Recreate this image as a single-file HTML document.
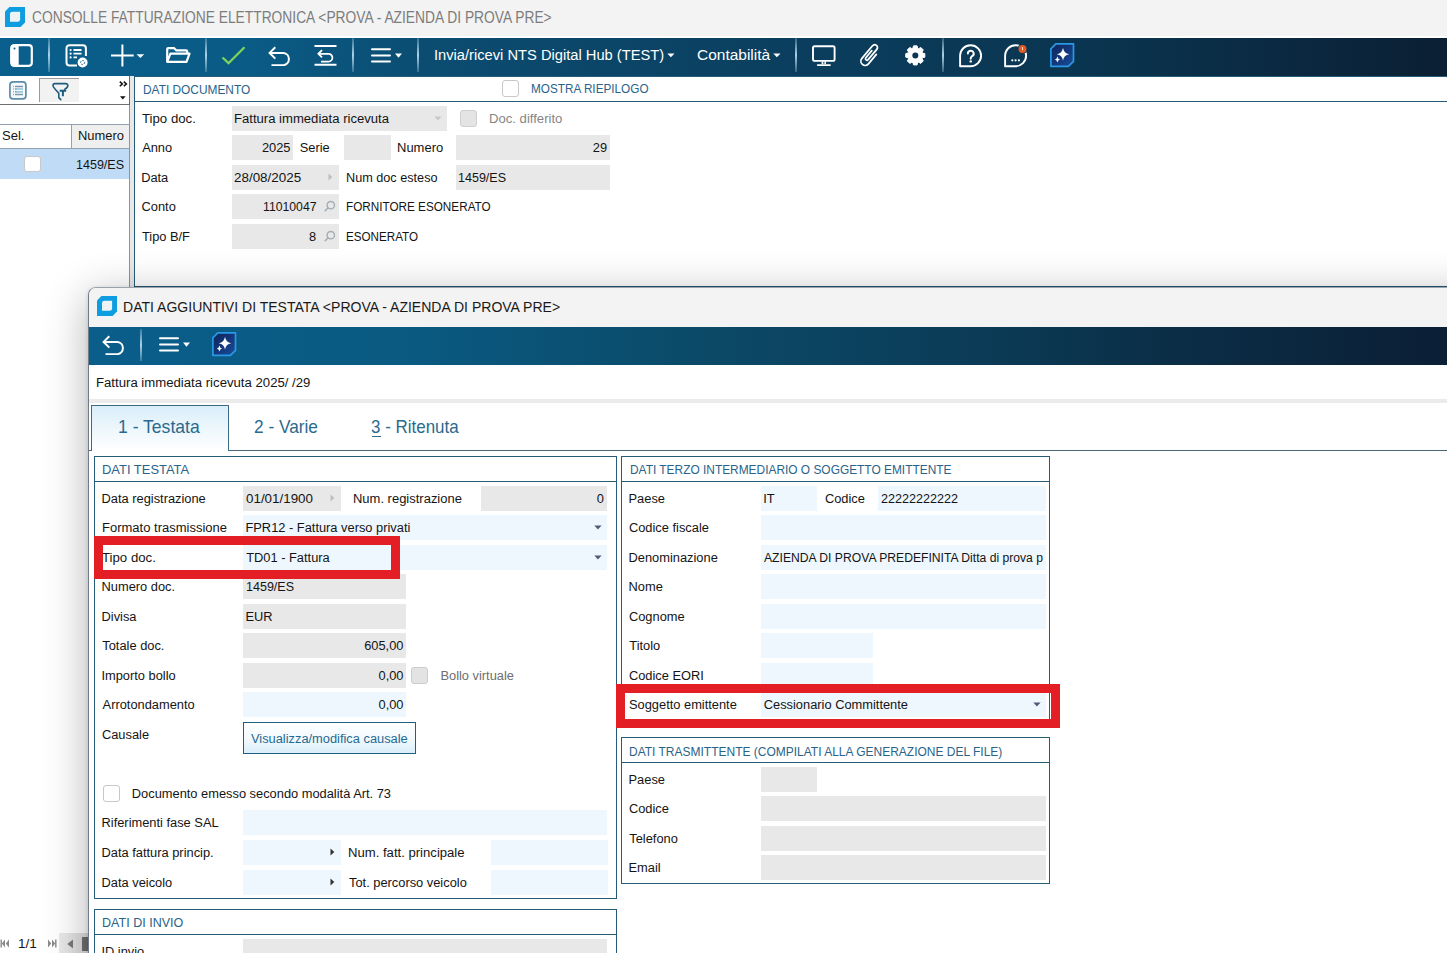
<!DOCTYPE html>
<html><head><meta charset="utf-8"><title>Consolle Fatturazione Elettronica</title>
<style>
html,body{margin:0;padding:0;width:1447px;height:953px;overflow:hidden;background:#fff;font-family:"Liberation Sans", sans-serif;}
body>div,body>svg{position:absolute;}
.t{white-space:nowrap;line-height:normal;}
</style></head><body>
<div style="left:0px;top:0px;width:1447.00px;height:35.80px;background:#f3f3f3"></div>
<div style="left:0px;top:35.8px;width:1447.00px;height:2.20px;background:#ffffff"></div>
<svg style="left:5px;top:7px;" width="20" height="20" viewBox="0 0 20 20"><path d="M4.4 0H20V15.6L15.6 20H0V4.4Z" fill="#0d9de0"/><path d="M7.3 4.7H15.1V12.2Q15.1 14.7 12.7 14.7H5V7Q5 4.7 7.3 4.7Z" fill="#eef3f6"/></svg>
<div class="t" style="left:31.81px;top:9px;font-size:15.8px;color:#7c7c7c;transform:scaleX(0.8731);transform-origin:0 0;">CONSOLLE FATTURAZIONE ELETTRONICA &lt;PROVA - AZIENDA DI PROVA PRE&gt;</div>
<div style="left:0px;top:38px;width:1447.00px;height:38.00px;background:linear-gradient(90deg,#0a5f8c 0px,#0a5b86 250px,#0b4d72 420px,#0b3e5e 800px,#0a3550 1080px,#0b2b44 1250px,#0b1f33 1447px)"></div>
<svg style="left:10px;top:44px;" width="23" height="23" viewBox="0 0 23 23"><rect x="1.2" y="1.2" width="20.6" height="20.6" rx="3" fill="none" stroke="#fff" stroke-width="2.2"/><rect x="1.2" y="1.2" width="7.5" height="20.6" fill="#fff"/><circle cx="4.5" cy="4.5" r="1" fill="#0a5e8a"/></svg>
<div style="left:48.3px;top:38px;width:1.80px;height:34.00px;background:linear-gradient(180deg,rgba(180,215,235,0.25),rgba(180,215,235,0.95) 50%,rgba(180,215,235,0.25))"></div>
<svg style="left:65px;top:44px;" width="24" height="24" viewBox="0 0 24 24"><path d="M12 21.5H4.5a3 3 0 0 1-3-3V4.2a3 3 0 0 1 3-3h13.4a3 3 0 0 1 3 3V12" fill="none" stroke="#fff" stroke-width="2"/><circle cx="5.6" cy="6" r="1.1" fill="#fff"/><circle cx="5.6" cy="9.7" r="1.1" fill="#fff"/><circle cx="5.6" cy="13.4" r="1.1" fill="#fff"/><path d="M8.5 6H16.5M8.5 9.7H16.5M8.5 13.4H12" stroke="#fff" stroke-width="1.8"/><circle cx="17.6" cy="18.5" r="5" fill="#fff"/><circle cx="17.6" cy="18.5" r="2" fill="none" stroke="#0a5e8a" stroke-width="1" stroke-dasharray="1.5 1.2"/></svg>
<svg style="left:110px;top:44px;" width="36" height="23" viewBox="0 0 36 23"><path d="M12.4 0.5V22.5M1 11.6H23.7" stroke="#fff" stroke-width="2"/><path d="M26.5 10.2H34.2L30.35 14.1Z" fill="#fff"/></svg>
<svg style="left:166px;top:47px;" width="25" height="17" viewBox="0 0 25 17"><path d="M1.2 14.8V2.3Q1.2 1.2 2.3 1.2H8.2L10.2 3.3H20Q21.2 3.3 21.2 4.5V6.5" fill="none" stroke="#fff" stroke-width="2.2" stroke-linejoin="round"/><path d="M1.2 14.8L4.4 6.6H23.5L20.5 14.8Z" fill="none" stroke="#fff" stroke-width="2.2" stroke-linejoin="round"/></svg>
<div style="left:205.3px;top:38px;width:1.80px;height:34.00px;background:linear-gradient(180deg,rgba(180,215,235,0.25),rgba(180,215,235,0.95) 50%,rgba(180,215,235,0.25))"></div>
<svg style="left:221px;top:46px;" width="25" height="19" viewBox="0 0 25 19"><path d="M1.5 11.5L7.5 17.2L23.5 1.2" fill="none" stroke="#7ed35a" stroke-width="2.3"/></svg>
<svg style="left:267.5px;top:46px;" width="24" height="20" viewBox="0 0 24 20"><path d="M7.3 1.2L1.6 6.9L7.3 12.6" fill="none" stroke="#fff" stroke-width="2"/><path d="M1.8 6.9H15.5a6.2 6.2 0 0 1 0 12.3H3.5" fill="none" stroke="#fff" stroke-width="2"/></svg>
<svg style="left:314px;top:45px;" width="24" height="21" viewBox="0 0 24 21"><path d="M0.5 1H22.5M0.5 19.8H22.5" stroke="#fff" stroke-width="2"/><path d="M8 5.2L4.4 8.8L8 12.4" fill="none" stroke="#fff" stroke-width="1.8"/><path d="M4.6 8.8H14.5a3.9 3.9 0 0 1 0 7.8H7" fill="none" stroke="#fff" stroke-width="1.8"/></svg>
<div style="left:352.3px;top:38px;width:1.80px;height:34.00px;background:linear-gradient(180deg,rgba(180,215,235,0.25),rgba(180,215,235,0.95) 50%,rgba(180,215,235,0.25))"></div>
<svg style="left:370.5px;top:48px;" width="32" height="16" viewBox="0 0 32 16"><path d="M1 1.3H19M1 7.4H19M1 13.4H19" stroke="#fff" stroke-width="2" stroke-linecap="round"/><path d="M24 5.6H31L27.5 9.7Z" fill="#fff"/></svg>
<div style="left:417.3px;top:38px;width:1.80px;height:34.00px;background:linear-gradient(180deg,rgba(180,215,235,0.25),rgba(180,215,235,0.95) 50%,rgba(180,215,235,0.25))"></div>
<div class="t" style="left:433.64px;top:46px;font-size:15.3px;color:#ffffff;transform:scaleX(0.9603);transform-origin:0 0;">Invia/ricevi NTS Digital Hub (TEST)</div>
<svg style="left:667px;top:53px;" width="8" height="5" viewBox="0 0 8 5"><path d="M0.3 0.5H7.5L3.9 4.3Z" fill="#fff"/></svg>
<div class="t" style="left:697.03px;top:46px;font-size:15.3px;color:#ffffff;transform:scaleX(1.0117);transform-origin:0 0;">Contabilità</div>
<svg style="left:772.5px;top:53px;" width="8" height="5" viewBox="0 0 8 5"><path d="M0.3 0.5H7.5L3.9 4.3Z" fill="#fff"/></svg>
<div style="left:794.8px;top:38px;width:1.80px;height:34.00px;background:linear-gradient(180deg,rgba(180,215,235,0.25),rgba(180,215,235,0.95) 50%,rgba(180,215,235,0.25))"></div>
<svg style="left:811px;top:44px;" width="26" height="23" viewBox="0 0 26 23"><rect x="2" y="2.3" width="21.6" height="14.6" rx="1.6" fill="none" stroke="#fff" stroke-width="1.9"/><path d="M10.6 17.5H15V20H10.6Z" fill="#fff"/><path d="M12 18.3H13.6V19.6H12Z" fill="#0b3d5c"/><path d="M6.8 21.1H18.9" stroke="#fff" stroke-width="1.9" stroke-linecap="round"/></svg>
<svg style="left:857px;top:42px;" width="26" height="27" viewBox="0 0 26 27"><g transform="translate(12.8 13.6) rotate(40) translate(-4.75 -12.6)"><path d="M9 7.5V19.8a4.25 4.25 0 0 1-8.5 0V3.3a2.8 2.8 0 0 1 5.6 0V16.8a1.5 1.5 0 0 1-3 0V7.5" fill="none" stroke="#fff" stroke-width="1.75" stroke-linecap="round" stroke-linejoin="round"/></g></svg>
<svg style="left:905px;top:45px;" width="21" height="21" viewBox="0 0 21 21"><polygon points="17.53,8.05 19.84,8.63 19.84,12.17 17.53,12.75 17.07,13.85 18.29,15.89 15.79,18.39 13.75,17.17 12.65,17.63 12.07,19.94 8.53,19.94 7.95,17.63 6.85,17.17 4.81,18.39 2.31,15.89 3.53,13.85 3.07,12.75 0.76,12.17 0.76,8.63 3.07,8.05 3.53,6.95 2.31,4.91 4.81,2.41 6.85,3.63 7.95,3.17 8.53,0.86 12.07,0.86 12.65,3.17 13.75,3.63 15.79,2.41 18.29,4.91 17.07,6.95" fill="#fff" stroke="#fff" stroke-width="1" stroke-linejoin="round"/><circle cx="10.3" cy="10.4" r="3" fill="#0b3654"/></svg>
<div style="left:942.3px;top:38px;width:1.80px;height:34.00px;background:linear-gradient(180deg,rgba(180,215,235,0.25),rgba(180,215,235,0.95) 50%,rgba(180,215,235,0.25))"></div>
<svg style="left:958.5px;top:43.8px;" width="24" height="24" viewBox="0 0 24 24"><path d="M1.1 22.2V11.6a10.5 10.5 0 1 1 10.5 10.6Z" fill="none" stroke="#fff" stroke-width="1.9" stroke-linejoin="round"/><path d="M8.9 9.6a2.9 2.9 0 1 1 4.2 2.6Q11.7 13 11.7 14.8" fill="none" stroke="#fff" stroke-width="2" stroke-linecap="round"/><circle cx="11.7" cy="17.4" r="1.2" fill="#fff"/></svg>
<svg style="left:1003.8px;top:43.8px;" width="24" height="24" viewBox="0 0 24 24"><path d="M1.1 22.2V11.6a10.5 10.5 0 1 1 10.5 10.6Z" fill="none" stroke="#fff" stroke-width="1.9" stroke-linejoin="round"/><circle cx="8.3" cy="16.3" r="1.1" fill="#fff"/><circle cx="11.6" cy="16.3" r="1.1" fill="#fff"/><circle cx="14.9" cy="16.3" r="1.1" fill="#fff"/><circle cx="18.5" cy="5.0" r="5.0" fill="#0b3553"/><circle cx="18.5" cy="5.0" r="4.0" fill="#e25a22"/><path d="M18.5 3V6.2" stroke="#ffd9c0" stroke-width="1"/></svg>
<svg style="left:1049.5px;top:42.8px;" width="25" height="25" viewBox="0 0 25 25"><defs><linearGradient id="aig" x1="0" y1="0" x2="1" y2="1"><stop offset="0" stop-color="#0c2358"/><stop offset="1" stop-color="#1a4c9c"/></linearGradient></defs><path d="M5.8 0.9H23.5V18.3L18.3 23.4H0.9V5.8Z" fill="url(#aig)" stroke="#2a98e4" stroke-width="1.7" stroke-linejoin="round"/><path d="M13 4.7Q13.8 10.2 19.2 11.2Q13.8 12.2 13 17.6Q12.2 12.2 6.8 11.2Q12.2 10.2 13 4.7Z" fill="#fff"/><path d="M7.4 13.6Q7.8 16.1 10.1 16.6Q7.8 17.1 7.4 19.6Q7 17.1 4.7 16.6Q7 16.1 7.4 13.6Z" fill="#fff"/></svg>
<div style="left:0px;top:76px;width:129.20px;height:877.00px;background:#ffffff"></div>
<div style="left:129.2px;top:76px;width:1.10px;height:877.00px;background:#8595a5"></div>
<div style="left:130.3px;top:76px;width:3.90px;height:877.00px;background:#e8e8e8"></div>
<div style="left:0px;top:103.8px;width:129.50px;height:1.20px;background:#6f6f6f"></div>
<div style="left:129.2px;top:76px;width:1.10px;height:28.50px;background:#6a6a6a"></div>
<svg style="left:9px;top:80.5px;" width="18" height="19" viewBox="0 0 18 19"><rect x="0.9" y="0.9" width="16" height="17" rx="3.2" fill="#f4f9fc" stroke="#5f8ca6" stroke-width="1.7"/><path d="M6 5.4H14M6 8H14M6 10.8H14M6 13.6H14" stroke="#7f97a6" stroke-width="1.5"/><path d="M4 5.4H5M4 8H5M4 10.8H5M4 13.6H5" stroke="#9fb0bb" stroke-width="1.5"/><path d="M7.5 8H14M7.5 10.8H14" stroke="#a8dcf6" stroke-width="1.3"/></svg>
<div style="left:39px;top:78px;width:40.00px;height:24.00px;background:#f2f2f2;border-left:1px solid #9a9a9a;border-top:1px solid #9a9a9a;box-sizing:border-box"></div>
<svg style="left:51.5px;top:81.5px;" width="17" height="19" viewBox="0 0 17 19"><path d="M12.8 7.3Q15.8 5.8 15.8 3.6Q15.8 1.6 13.8 1.6H3Q1 1.6 1 3.6Q1 5 3 7L6.8 11.3V15.6L8.8 17.6" fill="none" stroke="#1d5c7c" stroke-width="1.6" stroke-linecap="round" stroke-linejoin="round"/><path d="M7.6 8.8H14.2M10.9 8.8V14.3" stroke="#1d5c7c" stroke-width="2"/></svg>
<svg style="left:118.5px;top:81px;" width="9" height="6" viewBox="0 0 9 6"><path d="M0.8 0.6L3.4 2.9L0.8 5.2M4.8 0.6L7.4 2.9L4.8 5.2" fill="none" stroke="#111" stroke-width="1.5"/></svg>
<svg style="left:120px;top:95.5px;" width="6" height="4" viewBox="0 0 6 4"><path d="M0 0.2H5.6L2.8 3.6Z" fill="#111"/></svg>
<div style="left:0px;top:124px;width:129.50px;height:1.20px;background:#8fa3b5"></div>
<div style="left:71px;top:124px;width:1.20px;height:24.50px;background:#8fa3b5"></div>
<div style="left:72.2px;top:125.2px;width:57.00px;height:22.60px;background:#efefef"></div>
<div style="left:0px;top:147.6px;width:129.50px;height:1.20px;background:#8fa3b5"></div>
<div style="left:0px;top:148.8px;width:129.20px;height:30.70px;background:#c0dbf5"></div>
<div class="t" style="left:2.01px;top:128px;font-size:12.85px;color:#141414;transform:scaleX(1.0147);transform-origin:0 0;">Sel.</div>
<div class="t" style="left:78.24px;top:128px;font-size:12.85px;color:#141414;transform:scaleX(1.0044);transform-origin:0 0;">Numero</div>
<div style="left:24.4px;top:156.2px;width:16.20px;height:16.00px;background:#fff;border:1.3px solid #c9c9c9;border-radius:3px;box-sizing:border-box"></div>
<div class="t" style="left:75.56px;top:157px;font-size:12.85px;color:#141414;transform:scaleX(0.9755);transform-origin:0 0;">1459/ES</div>
<div style="left:58.7px;top:933px;width:29.30px;height:20.00px;background:linear-gradient(90deg,#eaeaea,#dcdcdc)"></div>
<svg style="left:0px;top:939px;" width="10" height="9" viewBox="0 0 10 9"><path d="M1.2 0.5V8.5" stroke="#8a8a8a" stroke-width="1.4"/><path d="M5 0.5L1.8 4.5L5 8.5ZM9 0.5L5.8 4.5L9 8.5Z" fill="#8a8a8a"/></svg>
<div class="t" style="left:17.68px;top:936px;font-size:12.85px;color:#141414;transform:scaleX(1.0560);transform-origin:0 0;">1/1</div>
<svg style="left:47px;top:939px;" width="10" height="9" viewBox="0 0 10 9"><path d="M8.8 0.5V8.5" stroke="#8a8a8a" stroke-width="1.4"/><path d="M1 0.5L4.2 4.5L1 8.5ZM5 0.5L8.2 4.5L5 8.5Z" fill="#8a8a8a"/></svg>
<svg style="left:66.5px;top:939px;" width="7" height="10" viewBox="0 0 7 10"><path d="M6 0.5L0.3 5L6 9.5Z" fill="#7a7a7a"/></svg>
<div style="left:82px;top:937.3px;width:6.00px;height:13.50px;background:#707070"></div>
<div style="left:134.2px;top:76px;width:1312.80px;height:211.00px;background:#ffffff"></div>
<div style="left:134.2px;top:76px;width:1312.80px;height:1.20px;background:#255d78"></div>
<div style="left:134.2px;top:76px;width:1.20px;height:211.00px;background:#255d78"></div>
<div style="left:134.2px;top:100.5px;width:1312.80px;height:1.20px;background:#255d78"></div>
<div style="left:134.2px;top:285.8px;width:1312.80px;height:1.40px;background:#255d78"></div>
<div class="t" style="left:142.72px;top:83px;font-size:12.4px;color:#2a6389;transform:scaleX(0.9591);transform-origin:0 0;">DATI DOCUMENTO</div>
<div style="left:502px;top:80px;width:17.20px;height:17.20px;background:#fff;border:1.3px solid #c8c8c8;border-radius:3px;box-sizing:border-box"></div>
<div class="t" style="left:531.43px;top:82px;font-size:12.4px;color:#2a6389;transform:scaleX(0.9484);transform-origin:0 0;">MOSTRA RIEPILOGO</div>
<div class="t" style="left:141.90px;top:111px;font-size:12.85px;color:#141414;transform:scaleX(1.0291);transform-origin:0 0;">Tipo doc.</div>
<div style="left:232px;top:106px;width:215.00px;height:24.70px;background:#e8e8e8"></div>
<div class="t" style="left:233.92px;top:111px;font-size:12.85px;color:#141414;transform:scaleX(1.0193);transform-origin:0 0;">Fattura immediata ricevuta</div>
<svg style="left:434px;top:115.85px;" width="8" height="5" viewBox="0 0 8 5"><path d="M0.3 0.6H7.6L3.95 4.4Z" fill="#c8c8c8"/></svg>
<div style="left:460px;top:109.6px;width:17.20px;height:17.30px;background:#e4e4e4;border:1.3px solid #cfcfcf;border-radius:3px;box-sizing:border-box"></div>
<div class="t" style="left:489.32px;top:111px;font-size:12.85px;color:#858585;transform:scaleX(1.0210);transform-origin:0 0;">Doc. differito</div>
<div class="t" style="left:142.17px;top:140px;font-size:12.85px;color:#141414;">Anno</div>
<div style="left:232px;top:135px;width:61.00px;height:24.70px;background:#e8e8e8"></div>
<div class="t" style="left:261.95px;top:140px;font-size:12.85px;color:#141414;">2025</div>
<div class="t" style="left:299.72px;top:140px;font-size:12.85px;color:#141414;">Serie</div>
<div style="left:344px;top:135px;width:47.00px;height:24.70px;background:#e8e8e8"></div>
<div class="t" style="left:397.13px;top:140px;font-size:12.85px;color:#141414;transform:scaleX(1.0112);transform-origin:0 0;">Numero</div>
<div style="left:456px;top:135px;width:154.00px;height:24.70px;background:#e8e8e8"></div>
<div class="t" style="left:592.81px;top:140px;font-size:12.85px;color:#141414;">29</div>
<div class="t" style="left:141.14px;top:170px;font-size:12.85px;color:#141414;">Data</div>
<div style="left:232px;top:165px;width:107.00px;height:24.70px;background:#e8e8e8"></div>
<div class="t" style="left:234.33px;top:170px;font-size:12.85px;color:#141414;transform:scaleX(1.0450);transform-origin:0 0;">28/08/2025</div>
<svg style="left:328px;top:173.35px;" width="5" height="8" viewBox="0 0 5 8"><path d="M0.5 0.5L4.3 4L0.5 7.5Z" fill="#bdbdbd"/></svg>
<div class="t" style="left:346.35px;top:170px;font-size:12.85px;color:#141414;transform:scaleX(0.9861);transform-origin:0 0;">Num doc esteso</div>
<div style="left:456px;top:165px;width:154.00px;height:24.70px;background:#e8e8e8"></div>
<div class="t" style="left:458.06px;top:170px;font-size:12.85px;color:#141414;transform:scaleX(0.9755);transform-origin:0 0;">1459/ES</div>
<div class="t" style="left:141.56px;top:199px;font-size:12.85px;color:#141414;">Conto</div>
<div style="left:232px;top:194px;width:107.00px;height:24.70px;background:#e8e8e8"></div>
<div class="t" style="left:262.68px;top:199px;font-size:12.85px;color:#141414;transform:scaleX(0.9522);transform-origin:0 0;">11010047</div>
<svg style="left:323.5px;top:200.35px;" width="12" height="12" viewBox="0 0 12 12"><circle cx="6.8" cy="5.2" r="3.7" fill="none" stroke="#a3abb3" stroke-width="1.4"/><path d="M4.2 7.8L1.2 10.8" stroke="#a3abb3" stroke-width="1.5" stroke-linecap="round"/></svg>
<div class="t" style="left:346.43px;top:199px;font-size:12.85px;color:#141414;transform:scaleX(0.9131);transform-origin:0 0;">FORNITORE ESONERATO</div>
<div class="t" style="left:141.91px;top:229px;font-size:12.85px;color:#141414;">Tipo B/F</div>
<div style="left:232px;top:224px;width:107.00px;height:24.70px;background:#e8e8e8"></div>
<div class="t" style="left:309.01px;top:229px;font-size:12.85px;color:#141414;">8</div>
<svg style="left:323.5px;top:230.35px;" width="12" height="12" viewBox="0 0 12 12"><circle cx="6.8" cy="5.2" r="3.7" fill="none" stroke="#a3abb3" stroke-width="1.4"/><path d="M4.2 7.8L1.2 10.8" stroke="#a3abb3" stroke-width="1.5" stroke-linecap="round"/></svg>
<div class="t" style="left:346.44px;top:229px;font-size:12.85px;color:#141414;transform:scaleX(0.9057);transform-origin:0 0;">ESONERATO</div>
<div style="left:88px;top:287.5px;width:1400px;height:700px;border-radius:8px 0 0 0;box-shadow:0 8px 44px rgba(0,0,0,0.30),0 0 4px rgba(0,0,0,0.14)"></div>
<div style="left:87.5px;top:287.2px;width:1400px;height:700px;background:#fff;border:1px solid #9aa3ab;border-left-color:#6f7d8b;border-radius:8px 0 0 0;box-sizing:border-box"></div>
<div style="left:88.5px;top:288px;width:1358.50px;height:39.00px;background:#f3f3f3;border-radius:7px 0 0 0"></div>
<svg style="left:97px;top:296px;" width="20" height="20" viewBox="0 0 20 20"><path d="M4.4 0H20V15.6L15.6 20H0V4.4Z" fill="#0d9de0"/><path d="M7.3 4.7H15.1V12.2Q15.1 14.7 12.7 14.7H5V7Q5 4.7 7.3 4.7Z" fill="#eef3f6"/></svg>
<div class="t" style="left:122.64px;top:298px;font-size:15.5px;color:#1a1a1a;transform:scaleX(0.9052);transform-origin:0 0;">DATI AGGIUNTIVI DI TESTATA &lt;PROVA - AZIENDA DI PROVA PRE&gt;</div>
<div style="left:88.5px;top:327px;width:1358.50px;height:37.60px;background:linear-gradient(90deg,#0a5e8a 0px,#0a5a82 312px,#0b4a68 612px,#0b3a55 912px,#0b2f48 1062px,#0b1f35 1359px)"></div>
<svg style="left:101.5px;top:335px;" width="24" height="20" viewBox="0 0 24 20"><path d="M7.3 1.2L1.6 6.9L7.3 12.6" fill="none" stroke="#fff" stroke-width="2"/><path d="M1.8 6.9H15.5a6.2 6.2 0 0 1 0 12.3H3.5" fill="none" stroke="#fff" stroke-width="2"/></svg>
<div style="left:140.3px;top:329px;width:1.80px;height:32.00px;background:linear-gradient(180deg,rgba(180,215,235,0.25),rgba(180,215,235,0.95) 50%,rgba(180,215,235,0.25))"></div>
<svg style="left:158.5px;top:336.6px;" width="32" height="16" viewBox="0 0 32 16"><path d="M1 1.3H19M1 7.4H19M1 13.4H19" stroke="#fff" stroke-width="2" stroke-linecap="round"/><path d="M24 5.6H31L27.5 9.7Z" fill="#fff"/></svg>
<svg style="left:211.5px;top:331.5px;" width="25" height="25" viewBox="0 0 25 25"><defs><linearGradient id="aig" x1="0" y1="0" x2="1" y2="1"><stop offset="0" stop-color="#0c2358"/><stop offset="1" stop-color="#1a4c9c"/></linearGradient></defs><path d="M5.8 0.9H23.5V18.3L18.3 23.4H0.9V5.8Z" fill="url(#aig)" stroke="#2a98e4" stroke-width="1.7" stroke-linejoin="round"/><path d="M13 4.7Q13.8 10.2 19.2 11.2Q13.8 12.2 13 17.6Q12.2 12.2 6.8 11.2Q12.2 10.2 13 4.7Z" fill="#fff"/><path d="M7.4 13.6Q7.8 16.1 10.1 16.6Q7.8 17.1 7.4 19.6Q7 17.1 4.7 16.6Q7 16.1 7.4 13.6Z" fill="#fff"/></svg>
<div class="t" style="left:95.61px;top:375px;font-size:12.85px;color:#141414;transform:scaleX(1.0249);transform-origin:0 0;">Fattura immediata ricevuta 2025/ /29</div>
<div style="left:88.5px;top:399px;width:1358.50px;height:3.60px;background:#ebebeb"></div>
<div style="left:88.5px;top:449.6px;width:1358.50px;height:1.20px;background:#4d6677"></div>
<div style="left:91px;top:405px;width:138px;height:46px;background:linear-gradient(180deg,#d9eefa 0%,#f4fafd 70%,#ffffff 100%);border:1.2px solid #3d6a84;border-bottom:none;box-sizing:border-box"></div>
<div class="t" style="left:118.38px;top:417px;font-size:17.8px;color:#2a6a8e;transform:scaleX(0.9880);transform-origin:0 0;">1 - Testata</div>
<div class="t" style="left:254.34px;top:417px;font-size:17.8px;color:#2a6a8e;transform:scaleX(0.9704);transform-origin:0 0;">2 - Varie</div>
<div class="t" style="left:371.46px;top:417px;font-size:17.8px;color:#2a6a8e;transform:scaleX(0.9534);transform-origin:0 0;">3 - Ritenuta</div>
<div style="left:372.1px;top:435.8px;width:9.40px;height:1.20px;background:#2a6a8e"></div>
<div style="left:94.3px;top:456.3px;width:522.3px;height:442.7px;border:1.2px solid #255d78;box-sizing:border-box"></div>
<div style="left:94.3px;top:480.8px;width:522.30px;height:1.20px;background:#255d78"></div>
<div class="t" style="left:102.43px;top:463px;font-size:12.2px;color:#2a6389;transform:scaleX(1.0613);transform-origin:0 0;">DATI TESTATA</div>
<div class="t" style="left:101.54px;top:491px;font-size:12.85px;color:#141414;">Data registrazione</div>
<div style="left:243px;top:486px;width:97.70px;height:24.70px;background:#e8e8e8"></div>
<div class="t" style="left:245.96px;top:491px;font-size:12.85px;color:#141414;transform:scaleX(1.0424);transform-origin:0 0;">01/01/1900</div>
<svg style="left:330px;top:494.35px;" width="5" height="8" viewBox="0 0 5 8"><path d="M0.5 0.5L4.3 4L0.5 7.5Z" fill="#bdbdbd"/></svg>
<div class="t" style="left:352.93px;top:491px;font-size:12.85px;color:#141414;transform:scaleX(1.0103);transform-origin:0 0;">Num. registrazione</div>
<div style="left:480.7px;top:486px;width:126.10px;height:24.70px;background:#e8e8e8"></div>
<div class="t" style="left:596.65px;top:491px;font-size:12.85px;color:#141414;">0</div>
<div class="t" style="left:101.53px;top:520px;font-size:12.85px;color:#141414;transform:scaleX(1.0122);transform-origin:0 0;">Formato trasmissione</div>
<div style="left:243px;top:515px;width:363.80px;height:24.70px;background:#eef7fd"></div>
<div class="t" style="left:245.44px;top:520px;font-size:12.85px;color:#141414;">FPR12 - Fattura verso privati</div>
<svg style="left:594px;top:524.85px;" width="8" height="5" viewBox="0 0 8 5"><path d="M0.3 0.6H7.6L3.95 4.4Z" fill="#4d5d78"/></svg>
<div class="t" style="left:102.30px;top:550px;font-size:12.85px;color:#141414;transform:scaleX(1.0291);transform-origin:0 0;">Tipo doc.</div>
<div style="left:243px;top:545px;width:363.80px;height:24.70px;background:#eef7fd"></div>
<div class="t" style="left:246.21px;top:550px;font-size:12.85px;color:#141414;">TD01 - Fattura</div>
<svg style="left:594px;top:554.85px;" width="8" height="5" viewBox="0 0 8 5"><path d="M0.3 0.6H7.6L3.95 4.4Z" fill="#4d5d78"/></svg>
<div class="t" style="left:101.54px;top:579px;font-size:12.85px;color:#141414;">Numero doc.</div>
<div style="left:243px;top:574px;width:162.80px;height:24.70px;background:#e8e8e8"></div>
<div class="t" style="left:245.56px;top:579px;font-size:12.85px;color:#141414;transform:scaleX(0.9755);transform-origin:0 0;">1459/ES</div>
<div class="t" style="left:101.54px;top:609px;font-size:12.85px;color:#141414;">Divisa</div>
<div style="left:243px;top:604px;width:162.80px;height:24.70px;background:#e8e8e8"></div>
<div class="t" style="left:245.44px;top:609px;font-size:12.85px;color:#141414;">EUR</div>
<div class="t" style="left:102.31px;top:638px;font-size:12.85px;color:#141414;">Totale doc.</div>
<div style="left:243px;top:633px;width:162.80px;height:24.70px;background:#e8e8e8"></div>
<div class="t" style="left:364.19px;top:638px;font-size:12.85px;color:#141414;">605,00</div>
<div class="t" style="left:101.41px;top:668px;font-size:12.85px;color:#141414;">Importo bollo</div>
<div style="left:243px;top:663px;width:162.80px;height:24.70px;background:#e8e8e8"></div>
<div class="t" style="left:378.49px;top:668px;font-size:12.85px;color:#141414;">0,00</div>
<div style="left:411px;top:667px;width:17.00px;height:17.00px;background:#e3e3e3;border:1.3px solid #cbcbcb;border-radius:3px;box-sizing:border-box"></div>
<div class="t" style="left:440.44px;top:668px;font-size:12.85px;color:#6e6e6e;">Bollo virtuale</div>
<div class="t" style="left:102.57px;top:697px;font-size:12.85px;color:#141414;">Arrotondamento</div>
<div style="left:243px;top:692px;width:162.80px;height:24.70px;background:#eef7fd"></div>
<div class="t" style="left:378.49px;top:697px;font-size:12.85px;color:#141414;">0,00</div>
<div class="t" style="left:101.96px;top:727px;font-size:12.85px;color:#141414;">Causale</div>
<div style="left:243.2px;top:722px;width:172.8px;height:31.8px;background:linear-gradient(180deg,#ffffff 0%,#f2f9fd 55%,#d9eefa 100%);border:1.2px solid #1f5f80;box-sizing:border-box"></div>
<div class="t" style="left:250.94px;top:731px;font-size:12.85px;color:#1f6a94;">Visualizza/modifica causale</div>
<div style="left:103.2px;top:785px;width:16.90px;height:16.60px;background:#fff;border:1.3px solid #c8c8c8;border-radius:3px;box-sizing:border-box"></div>
<div class="t" style="left:131.84px;top:786px;font-size:12.85px;color:#141414;">Documento emesso secondo modalità Art. 73</div>
<div class="t" style="left:101.54px;top:815px;font-size:12.85px;color:#141414;">Riferimenti fase SAL</div>
<div style="left:243px;top:810px;width:363.80px;height:24.70px;background:#eef7fd"></div>
<div class="t" style="left:101.54px;top:845px;font-size:12.85px;color:#141414;">Data fattura princip.</div>
<div style="left:243px;top:840px;width:97.70px;height:24.70px;background:#eef7fd"></div>
<svg style="left:330px;top:848.35px;" width="5" height="8" viewBox="0 0 5 8"><path d="M0.5 0.5L4.3 4L0.5 7.5Z" fill="#333"/></svg>
<div class="t" style="left:348.22px;top:845px;font-size:12.85px;color:#141414;transform:scaleX(1.0207);transform-origin:0 0;">Num. fatt. principale</div>
<div style="left:491px;top:840px;width:116.80px;height:24.70px;background:#eef7fd"></div>
<div class="t" style="left:101.54px;top:875px;font-size:12.85px;color:#141414;">Data veicolo</div>
<div style="left:243px;top:870px;width:97.70px;height:24.70px;background:#eef7fd"></div>
<svg style="left:330px;top:878.35px;" width="5" height="8" viewBox="0 0 5 8"><path d="M0.5 0.5L4.3 4L0.5 7.5Z" fill="#333"/></svg>
<div class="t" style="left:349.01px;top:875px;font-size:12.85px;color:#141414;">Tot. percorso veicolo</div>
<div style="left:491px;top:870px;width:116.80px;height:24.70px;background:#eef7fd"></div>
<div style="left:94.3px;top:909.2px;width:522.3px;height:100px;border:1.2px solid #255d78;box-sizing:border-box"></div>
<div style="left:94.3px;top:933.8px;width:522.30px;height:1.20px;background:#255d78"></div>
<div class="t" style="left:102.46px;top:916px;font-size:12.2px;color:#2a6389;transform:scaleX(1.0297);transform-origin:0 0;">DATI DI INVIO</div>
<div style="left:243px;top:939px;width:363.80px;height:24.70px;background:#e8e8e8"></div>
<div class="t" style="left:101.41px;top:944px;font-size:12.85px;color:#141414;">ID invio</div>
<div style="left:620.8px;top:456.1px;width:429.4px;height:265.5px;border:1.2px solid #255d78;box-sizing:border-box"></div>
<div style="left:620.8px;top:480.7px;width:429.40px;height:1.20px;background:#255d78"></div>
<div class="t" style="left:629.52px;top:463px;font-size:12.2px;color:#2a6389;transform:scaleX(0.9768);transform-origin:0 0;">DATI TERZO INTERMEDIARIO O SOGGETTO EMITTENTE</div>
<div class="t" style="left:628.54px;top:491px;font-size:12.85px;color:#141414;">Paese</div>
<div style="left:761px;top:486px;width:56.00px;height:24.70px;background:#eef7fd"></div>
<div class="t" style="left:763.21px;top:491px;font-size:12.85px;color:#141414;">IT</div>
<div class="t" style="left:824.96px;top:491px;font-size:12.85px;color:#141414;">Codice</div>
<div style="left:877.8px;top:486px;width:168.20px;height:24.70px;background:#eef7fd"></div>
<div class="t" style="left:880.97px;top:491px;font-size:12.85px;color:#141414;transform:scaleX(0.9803);transform-origin:0 0;">22222222222</div>
<div class="t" style="left:628.96px;top:520px;font-size:12.85px;color:#141414;">Codice fiscale</div>
<div style="left:761px;top:515px;width:285.00px;height:24.70px;background:#eef7fd"></div>
<div class="t" style="left:628.54px;top:550px;font-size:12.85px;color:#141414;">Denominazione</div>
<div style="left:761px;top:545px;width:285.00px;height:24.70px;background:#eef7fd"></div>
<div class="t" style="left:764.37px;top:550px;font-size:12.85px;color:#141414;transform:scaleX(0.9456);transform-origin:0 0;width:294.6px;overflow:hidden;">AZIENDA DI PROVA PREDEFINITA Ditta di prova predefinita</div>
<div class="t" style="left:628.54px;top:579px;font-size:12.85px;color:#141414;">Nome</div>
<div style="left:761px;top:574px;width:285.00px;height:24.70px;background:#eef7fd"></div>
<div class="t" style="left:628.96px;top:609px;font-size:12.85px;color:#141414;">Cognome</div>
<div style="left:761px;top:604px;width:285.00px;height:24.70px;background:#eef7fd"></div>
<div class="t" style="left:629.31px;top:638px;font-size:12.85px;color:#141414;">Titolo</div>
<div style="left:761px;top:633px;width:112.20px;height:24.70px;background:#eef7fd"></div>
<div class="t" style="left:628.96px;top:668px;font-size:12.85px;color:#141414;">Codice EORI</div>
<div style="left:761px;top:663px;width:112.20px;height:24.70px;background:#eef7fd"></div>
<div class="t" style="left:629.02px;top:697px;font-size:12.85px;color:#141414;">Soggetto emittente</div>
<div style="left:761px;top:692px;width:285.00px;height:24.70px;background:#eef7fd"></div>
<div class="t" style="left:763.76px;top:697px;font-size:12.85px;color:#141414;">Cessionario Committente</div>
<svg style="left:1032.5px;top:701.85px;" width="8" height="5" viewBox="0 0 8 5"><path d="M0.3 0.6H7.6L3.95 4.4Z" fill="#4d5d78"/></svg>
<div style="left:620.8px;top:737.4px;width:429.4px;height:147.0px;border:1.2px solid #255d78;box-sizing:border-box"></div>
<div style="left:620.8px;top:761.9px;width:429.40px;height:1.20px;background:#255d78"></div>
<div class="t" style="left:629.01px;top:745px;font-size:12.2px;color:#2a6389;transform:scaleX(0.9838);transform-origin:0 0;">DATI TRASMITTENTE (COMPILATI ALLA GENERAZIONE DEL FILE)</div>
<div class="t" style="left:628.54px;top:772px;font-size:12.85px;color:#141414;">Paese</div>
<div style="left:761px;top:767px;width:56.20px;height:24.70px;background:#e8e8e8"></div>
<div class="t" style="left:628.96px;top:801px;font-size:12.85px;color:#141414;">Codice</div>
<div style="left:761px;top:796px;width:285.00px;height:24.70px;background:#e8e8e8"></div>
<div class="t" style="left:629.31px;top:831px;font-size:12.85px;color:#141414;">Telefono</div>
<div style="left:761px;top:826px;width:285.00px;height:24.70px;background:#e8e8e8"></div>
<div class="t" style="left:628.54px;top:860px;font-size:12.85px;color:#141414;">Email</div>
<div style="left:761px;top:855px;width:285.00px;height:24.70px;background:#e8e8e8"></div>
<div style="left:94.3px;top:535.8px;width:306.2px;height:42.8px;border:9px solid #e31e24;box-sizing:border-box"></div>
<div style="left:615.7px;top:684px;width:443.9px;height:43.6px;border:9px solid #e31e24;box-sizing:border-box"></div>
</body></html>
